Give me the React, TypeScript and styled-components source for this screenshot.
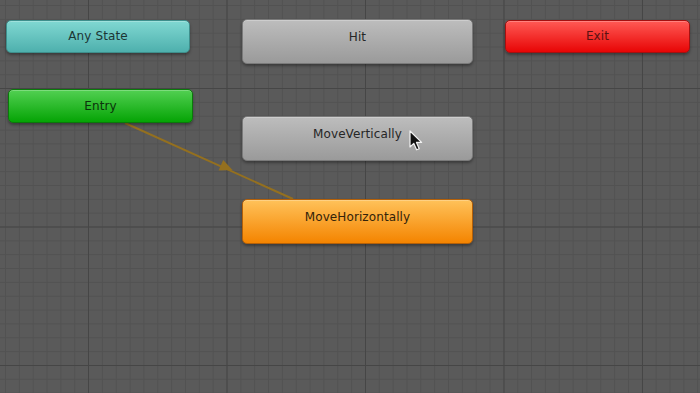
import React from "react";
import styled, { createGlobalStyle } from "styled-components";

type Kind = "any" | "entry" | "exit" | "plain" | "default";

interface StateNode {
  id: string;
  label: string;
  kind: Kind;
  x: number;
  y: number;
  w: number;
  h: number;
}

const nodes: StateNode[] = [
  { id: "any", label: "Any State", kind: "any", x: 6, y: 20, w: 184, h: 33 },
  { id: "entry", label: "Entry", kind: "entry", x: 8, y: 89, w: 185, h: 34 },
  { id: "exit", label: "Exit", kind: "exit", x: 505, y: 20, w: 185, h: 33 },
  { id: "hit", label: "Hit", kind: "plain", x: 242, y: 19, w: 231, h: 45 },
  { id: "vert", label: "MoveVertically", kind: "plain", x: 242, y: 116, w: 231, h: 45 },
  { id: "horiz", label: "MoveHorizontally", kind: "default", x: 242, y: 199, w: 231, h: 45 },
];

const palette: Record<Kind, { top: string; bottom: string; border: string; text: string }> = {
  any: { top: "#80d8d2", bottom: "#4eb0ad", border: "#3e8f8c", text: "#1c3534" },
  entry: { top: "#52d052", bottom: "#05a405", border: "#0a7a0a", text: "#0b330b" },
  exit: { top: "#ff5a55", bottom: "#e80505", border: "#a51010", text: "#5a1212" },
  plain: { top: "#bdbdbd", bottom: "#9a9a9a", border: "#7a7a7a", text: "#262626" },
  default: { top: "#ffc25a", bottom: "#f48400", border: "#b46008", text: "#33230a" },
};

const App: React.FC = () => {
  return (
    <>
      <GlobalStyle />
      <Canvas>
        <Links width={700} height={393}>
          <line x1={125} y1={123} x2={293} y2={199} stroke="#94701f" strokeWidth={2} />
          {/* arrow head pointing along the transition */}
          <polygon points="232.5,170 218.6,170.6 223.2,160" fill="#94701f" />
        </Links>
        {nodes.map((n) => (
          <Node
            key={n.id}
            $kind={n.kind}
            style={{ left: n.x, top: n.y, width: n.w, height: n.h }}
          >
            {n.label}
          </Node>
        ))}
        <Cursor width={14} height={22} viewBox="0 0 14 22">
          <path
            d="M1 1 L1 17 L4.8 13.4 L7.6 19.8 L10.2 18.7 L7.5 12.4 L12.6 12.4 Z"
            fill="#111"
            stroke="#f2f2f2"
            strokeWidth={1.2}
            strokeLinejoin="round"
          />
        </Cursor>
      </Canvas>
    </>
  );
};

const GlobalStyle = createGlobalStyle`
  html, body {
    margin: 0;
    padding: 0;
    background: #5a5a5a;
  }
`;

const Canvas = styled.div`
  position: relative;
  width: 700px;
  height: 393px;
  overflow: hidden;
  background-color: #5a5a5a;
  background-image:
    linear-gradient(to right, #464646 1px, transparent 1px),
    linear-gradient(to bottom, #464646 1px, transparent 1px),
    linear-gradient(to right, #525252 1px, transparent 1px),
    linear-gradient(to bottom, #525252 1px, transparent 1px);
  background-size: 138.5px 138.5px, 138.5px 138.5px, 13.85px 13.85px, 13.85px 13.85px;
  background-position: 88px 88px, 88px 88px, 5px 5px, 5px 5px;
  font-family: "Lucida Grande", "DejaVu Sans", "Liberation Sans", sans-serif;
`;

const Links = styled.svg`
  position: absolute;
  left: 0;
  top: 0;
`;

const Node = styled.div<{ $kind: Kind }>`
  position: absolute;
  box-sizing: border-box;
  display: flex;
  align-items: center;
  justify-content: center;
  padding-bottom: ${(p) => (p.$kind === "plain" || p.$kind === "default" ? "10px" : "1px")};
  border-radius: 5px;
  border: 1px solid ${(p) => palette[p.$kind].border};
  background: linear-gradient(
    to bottom,
    ${(p) => palette[p.$kind].top},
    ${(p) => palette[p.$kind].bottom}
  );
  box-shadow: 0 2px 3px rgba(0, 0, 0, 0.35), inset 0 1px 0 rgba(255, 255, 255, 0.25);
  color: ${(p) => palette[p.$kind].text};
  font-size: 12px;
  letter-spacing: 0.1px;
`;

const Cursor = styled.svg`
  position: absolute;
  left: 409px;
  top: 130px;
`;

export default App;
